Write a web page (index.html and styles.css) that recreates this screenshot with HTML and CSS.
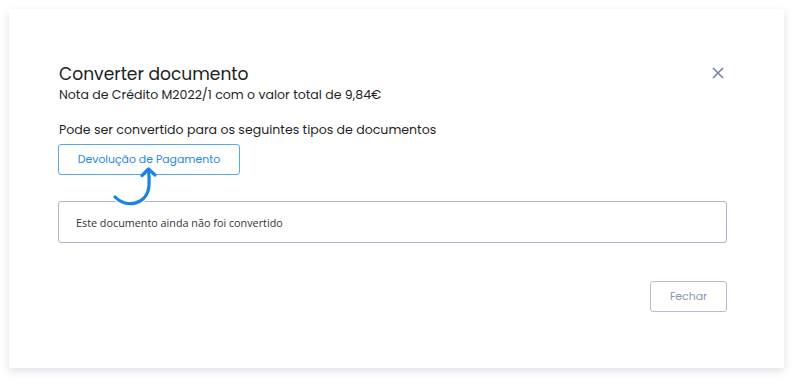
FILE: index.html
```html
<!DOCTYPE html>
<html lang="pt">
<head>
<meta charset="utf-8">
<link rel="stylesheet" href="styles.css">
</head>
<body>
<div class="modal">
  <div class="header">
    <div>
      <h1 class="title">Converter documento</h1>
      <p class="subtitle">Nota de Crédito M2022/1 com o valor total de 9,84€</p>
    </div>
    <button class="close" aria-label="Fechar">
      <svg width="12" height="12" viewBox="0 0 12 12"><path d="M1 1L11 11M11 1L1 11" stroke="#7282a3" stroke-width="1.6" fill="none"/></svg>
    </button>
  </div>
  <p class="label">Pode ser convertido para os seguintes tipos de documentos</p>
  <div class="options">
    <button class="doc-btn">Devolução de Pagamento</button>
    <svg class="arrow" width="50" height="46" viewBox="0 0 50 46">
      <path d="M4 34 C14 45 36 43 38 23 C38.5 16 38 11 37.5 7" stroke="#fff" stroke-width="6" fill="none" stroke-linecap="round"/>
      <path d="M4 34 C14 45 36 43 38 23 C38.5 16 38 11 37.5 7" stroke="#1a84e6" stroke-width="3.2" fill="none" stroke-linecap="round"/>
      <path d="M31 12.5 L37.5 6 L44 12" stroke="#1a84e6" stroke-width="3.2" fill="none" stroke-linecap="round" stroke-linejoin="round"/>
    </svg>
  </div>
  <div class="status">Este documento ainda não foi convertido</div>
  <div class="footer">
    <button class="btn-close">Fechar</button>
  </div>
</div>
</body>
</html>
```
FILE: styles.css
```css
html, body {
  margin: 0;
  padding: 0;
  background: #ffffff;
}
body {
  padding: 9px 16px 16px 9px;
  font-family: "Poppins", "Lato", "Noto Sans", sans-serif;
}
.modal {
  width: 775px;
  height: 359px;
  box-sizing: border-box;
  background: #fff;
  box-shadow: 0 3px 8px rgba(80, 90, 120, 0.18);
  padding: 53px 57px 0 49px;
}
.header {
  display: flex;
  justify-content: space-between;
  align-items: flex-start;
  padding-left: 1px;
}
.title {
  margin: 0;
  font-size: 17.1px;
  font-weight: 400;
  color: #222;
  line-height: 24px;
}
.subtitle {
  margin: 0;
  font-size: 12.55px;
  color: #1f1f1f;
  line-height: 18px;
}
.close {
  border: 0;
  background: none;
  padding: 0;
  margin: 5px 3px 0 0;
  width: 12px;
  height: 12px;
  display: flex;
}
.label {
  margin: 17px 0 0 1px;
  font-size: 12.55px;
  color: #1f1f1f;
  line-height: 18px;
}
.options {
  position: relative;
  margin-top: 5px;
  height: 57px;
  z-index: 1;
}
.doc-btn {
  width: 182px;
  height: 31px;
  border: 1px solid #5aa8f0;
  border-radius: 3px;
  background: #fff;
  color: #2688df;
  font-family: inherit;
  font-size: 10.9px;
  padding: 0;
}
.arrow {
  position: absolute;
  left: 53px;
  top: 19px;
}
.status {
  height: 42px;
  box-sizing: border-box;
  border: 1px solid #aab4ca;
  border-radius: 3px;
  padding: 0 17px;
  display: flex;
  align-items: center;
  font-family: "Open Sans", sans-serif;
  font-size: 10.8px;
  color: #333;
}
.footer {
  display: flex;
  justify-content: flex-end;
  margin-top: 38px;
}
.btn-close {
  width: 77px;
  height: 31px;
  border: 1px solid #b3bdd3;
  border-radius: 3px;
  background: #fff;
  color: #8a96b0;
  font-family: inherit;
  font-size: 10.9px;
  padding: 0;
}
```
